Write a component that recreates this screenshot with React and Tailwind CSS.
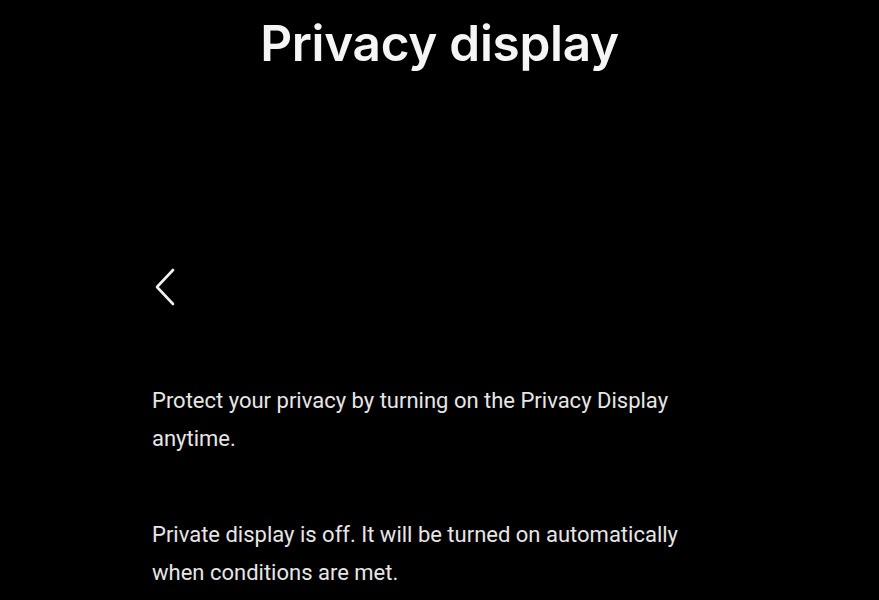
import React from 'react';

const App = () => {
  return (
    <div className="w-[879px] h-[600px] bg-black text-white overflow-hidden" style={{ fontFamily: 'Roboto, "Noto Sans", sans-serif' }}>
      <h1 className="pt-[11px] text-center text-[49.5px] font-semibold leading-[64px] tracking-[-0.3px] text-[#f5f5f5]" style={{ fontFamily: 'Inter, Roboto, sans-serif' }}>
        Privacy display
      </h1>

      <div className="pl-[152px] pr-[160px]">
        {/* Back chevron */}
        <div className="mt-[193px] h-[40px] flex items-center">
          <svg width="26" height="40" viewBox="0 0 26 40" fill="none" stroke="#f0f0f0" strokeWidth="2.6" strokeLinecap="round" strokeLinejoin="round">
            <path d="M21 2 L5 19 L21 36" />
          </svg>
        </div>

        <p className="mt-[74px] text-[22px] leading-[38px] text-[#e6e6e6]">
          Protect your privacy by turning on the Privacy Display anytime.
        </p>

        <p className="mt-[58px] text-[22px] leading-[38px] text-[#e6e6e6]">
          Private display is off. It will be turned on automatically when conditions are met.
        </p>
      </div>
    </div>
  );
};

export default App;
